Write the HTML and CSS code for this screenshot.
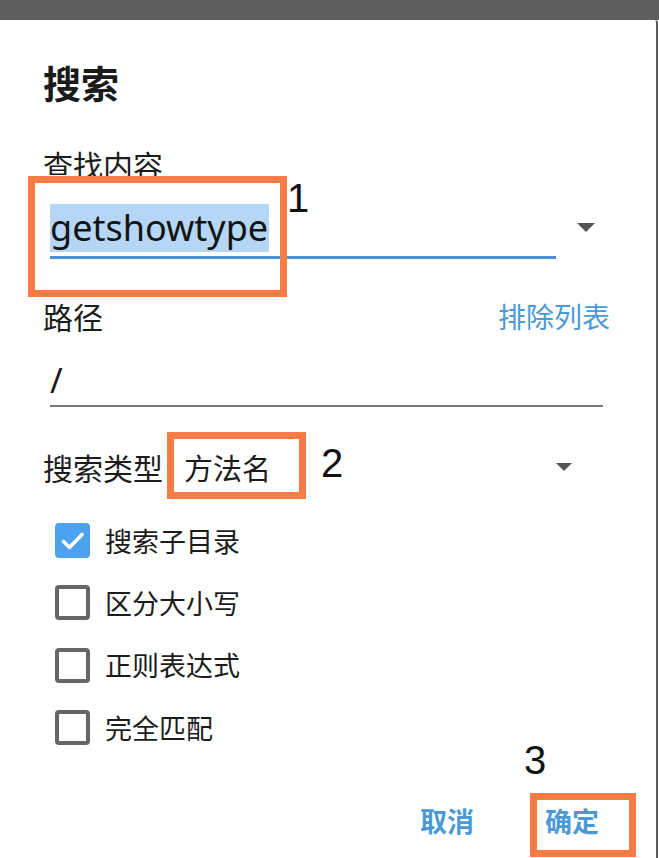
FILE: index.html
```html
<!DOCTYPE html>
<html lang="zh-CN">
<head>
<meta charset="utf-8">
<title>搜索</title>
<link rel="stylesheet" href="styles.css">
</head>
<body>
<div class="page">
  <div class="topbar"></div>
  <div class="dialog">
    <h1 class="title">搜索</h1>
    <div class="label find-label">查找内容</div>
    <div class="field-row">
      <div class="field active"><span class="sel">getshowtype</span></div>
      <span class="arrow arrow-lg"></span>
    </div>
    <div class="label-row">
      <span class="label">路径</span>
      <span class="link">排除列表</span>
    </div>
    <div class="field path"><span class="path-text">/</span></div>
    <div class="type-row">
      <span class="label">搜索类型</span>
      <span class="type-val">方法名</span>
      <span class="arrow arrow-sm"></span>
    </div>
    <ul class="checks">
      <li class="check"><span class="box on"><svg viewBox="0 0 35 35" width="35" height="35"><path d="M8.5 18.5 L14.5 24.5 L27 11.5" fill="none" stroke="#fff" stroke-width="3.6" stroke-linecap="round" stroke-linejoin="round"/></svg></span><span class="check-label">搜索子目录</span></li>
      <li class="check"><span class="box"></span><span class="check-label">区分大小写</span></li>
      <li class="check"><span class="box"></span><span class="check-label">正则表达式</span></li>
      <li class="check"><span class="box"></span><span class="check-label">完全匹配</span></li>
    </ul>
    <div class="actions">
      <span class="btn">取消</span>
      <span class="btn">确定</span>
    </div>
  </div>

  <div class="mark mark-1"></div>
  <div class="num num-1">1</div>
  <div class="mark mark-2"></div>
  <div class="num num-2">2</div>
  <div class="mark mark-3"></div>
  <div class="num num-3">3</div>
</div>
</body>
</html>
```

FILE: styles.css
```css
* { box-sizing: border-box; }

html, body {
  margin: 0;
  padding: 0;
  background: #ffffff;
}

body {
  font-family: "Noto Sans", "Noto Sans CJK SC", sans-serif;
  color: #1c1c1c;
  width: 659px;
  height: 858px;
  overflow: hidden;
}

.page {
  position: relative;
  width: 659px;
  height: 858px;
}

.topbar {
  height: 20px;
  background: #5f5f5f;
}

.dialog {
  width: 658px;
  height: 838px;
  background: #ffffff;
  border-right: 2px solid #5c5c5c;
  border-top-right-radius: 3px;
  padding: 0 53px 0 43px;
  display: flex;
  flex-direction: column;
}

.title {
  margin: 44px 0 0;
  font-family: "Noto Sans CJK SC", sans-serif;
  font-size: 38px;
  line-height: 36px;
  height: 36px;
  font-weight: 700;
  color: #1a1a1a;
}

.label {
  font-family: "Noto Sans CJK SC", sans-serif;
  font-size: 30px;
  line-height: 30px;
  height: 30px;
  color: #1c1c1c;
}

.find-label {
  margin-top: 49px;
}

.field-row {
  margin-top: 25px;
  display: flex;
  align-items: flex-start;
}

.field {
  margin-left: 7px;
  padding-bottom: 4px;
  border-bottom: 3px solid #4a92d8;
}

.field.active {
  width: 506px;
}

.sel {
  display: inline-block;
  font-family: "Noto Sans", sans-serif;
  font-size: 36px;
  line-height: 48px;
  height: 48px;
  background: #b6d6f6;
  color: #141414;
  padding-right: 1px;
}

.arrow {
  width: 0;
  height: 0;
  border-left: 9.5px solid transparent;
  border-right: 9.5px solid transparent;
  border-top: 9px solid #555555;
}

.arrow-lg {
  margin-left: 21px;
  margin-top: 19px;
}

.label-row {
  margin-top: 42px;
  display: flex;
  justify-content: space-between;
  align-items: center;
}

.link {
  font-family: "Noto Sans CJK SC", sans-serif;
  font-size: 28px;
  line-height: 30px;
  color: #4b9ad6;
  margin-right: -7px;
}

.field.path {
  margin-top: 25px;
  padding-bottom: 1px;
  border-bottom: 2px solid #777777;
}

.path-text {
  display: block;
  font-family: "Noto Sans", sans-serif;
  font-size: 34px;
  line-height: 48px;
  height: 48px;
  color: #1a1a1a;
}

.type-row {
  margin-top: 45px;
  display: flex;
  align-items: center;
  height: 30px;
}

.type-val {
  font-family: "Noto Sans CJK SC", sans-serif;
  font-size: 29px;
  line-height: 30px;
  margin-left: 21px;
  color: #1c1c1c;
}

.arrow-sm {
  margin-left: auto;
  margin-right: 31px;
  border-left-width: 8.5px;
  border-right-width: 8.5px;
  border-top-width: 8px;
}

.checks {
  list-style: none;
  margin: 41px 0 0;
  padding: 0 0 0 12px;
  display: flex;
  flex-direction: column;
  gap: 27.4px;
}

.check {
  display: flex;
  align-items: center;
  height: 35px;
}

.box {
  width: 35px;
  height: 35px;
  border: 4px solid #666666;
  border-radius: 4px;
  flex: none;
}

.box.on {
  border: none;
  background: #4ca2ee;
  border-radius: 4px;
}

.box.on svg {
  display: block;
}

.check-label {
  margin-left: 15px;
  font-family: "Noto Sans CJK SC", sans-serif;
  font-size: 27px;
  line-height: 30px;
  color: #1c1c1c;
}

.actions {
  margin-top: 62px;
  display: flex;
  justify-content: flex-end;
  gap: 71px;
  padding-right: 4px;
}

.btn {
  font-family: "Noto Sans CJK SC", sans-serif;
  font-size: 27px;
  line-height: 27px;
  font-weight: 700;
  color: #4b9ad6;
}

/* annotation overlays */
.mark {
  position: absolute;
  border: 7px solid #f67c44;
}

.mark-1 { left: 28px; top: 176px; width: 259px; height: 121px; }
.mark-2 { left: 167px; top: 432px; width: 139px; height: 67px; }
.mark-3 { left: 530px; top: 793px; width: 106px; height: 64px; }

.num {
  position: absolute;
  font-family: "Liberation Sans", Arial, sans-serif;
  font-size: 40px;
  line-height: 40px;
  color: #111111;
}

.num-1 { left: 287px; top: 178px; }
.num-2 { left: 321px; top: 443px; }
.num-3 { left: 524px; top: 740px; }
```
